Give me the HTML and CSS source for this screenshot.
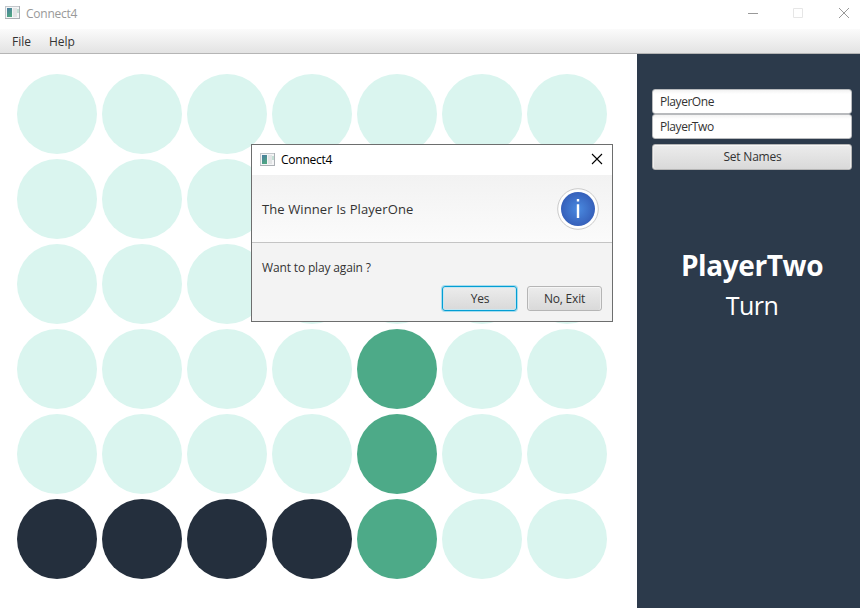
FILE: index.html
```html
<!DOCTYPE html>
<html lang="en">
<head>
<meta charset="utf-8">
<title>Connect4</title>
<link rel="stylesheet" href="styles.css">
</head>
<body>
<svg class="defs" width="0" height="0" aria-hidden="true">
  <defs>
    <linearGradient id="teal" x1="0" y1="0" x2="0.4" y2="1"><stop offset="0" stop-color="#4a7ba0"/><stop offset="1" stop-color="#4fa583"/></linearGradient>
    <radialGradient id="blue"><stop offset="0" stop-color="#4a8ae0"/><stop offset="1" stop-color="#3660ba"/></radialGradient>
    <symbol id="app" viewBox="0 0 16 14">
      <rect x=".5" y=".5" width="14" height="12" fill="#f4f5f6" stroke="#c3c7cb"/>
      <path d="M0 12.500h15M14.500 0v13" fill="none" stroke="#abafb4"/>
      <rect x="2" y="2" width="5" height="9" fill="url(#teal)"/>
      <rect x="8" y="2" width="4" height="9" fill="#e2e4e5"/>
      <rect x="12" y="3" width="2" height="4" fill="#c3dfd4"/>
    </symbol>
  </defs>
</svg>
<div class="window">
  <header class="titlebar">
    <svg class="app-icon" width="16" height="14"><use href="#app"/></svg>
    <span class="title">Connect4</span>
    <svg class="controls" width="102" height="12" fill="none" stroke="#999">
      <path d="M0 6.5h10"/><path d="M45.5 1.5h9v9h-9z" stroke="#e6e6e6"/><path d="M91 1l10 10M101 1l-10 10"/>
    </svg>
  </header>
  <nav class="menubar"><span class="file">File</span><span class="help">Help</span></nav>
  <main class="content">
    <section class="board">
      <i></i><i></i><i></i><i></i><i></i><i></i><i></i>
      <i></i><i></i><i></i><i></i><i></i><i></i><i></i>
      <i></i><i></i><i></i><i></i><i></i><i></i><i></i>
      <i></i><i></i><i></i><i></i><i class="green"></i><i></i><i></i>
      <i></i><i></i><i></i><i></i><i class="green"></i><i></i><i></i>
      <i class="dark"></i><i class="dark"></i><i class="dark"></i><i class="dark"></i><i class="green"></i><i></i><i></i>
    </section>
    <aside class="side">
      <div class="field"><span>PlayerOne</span></div>
      <div class="field"><span>PlayerTwo</span></div>
      <button class="btn set">Set Names</button>
      <div class="player"><span>PlayerTwo</span></div>
      <div class="turn"><span>Turn</span></div>
    </aside>
  </main>
  <div class="dialog">
    <div class="dialog-title">
      <svg class="app-icon" width="16" height="14"><use href="#app"/></svg>
      <span class="title">Connect4</span>
      <svg class="close" width="12" height="12" stroke="#000" stroke-width="1.1"><path d="M1 1l10 10M11 1L1 11"/></svg>
    </div>
    <div class="dialog-head">
      <span class="winner">The Winner Is PlayerOne</span>
      <svg width="42" height="42">
        <circle cx="21" cy="21" r="20.3" fill="#fff" stroke="#cacaca"/>
        <circle cx="21" cy="21" r="17" fill="url(#blue)"/>
        <path d="M19.800 11h2.400v2.600h-2.400zM19.800 16.200h2.400V30h-2.400z" fill="#fff"/>
      </svg>
    </div>
    <div class="dialog-body">
      <span class="again">Want to play again ?</span>
      <div class="actions"><button class="btn yes">Yes</button><button class="btn">No, Exit</button></div>
    </div>
  </div>
</div>
</body>
</html>
```
FILE: styles.css
```css
* { box-sizing: border-box; }
body { margin: 0; font: 12px/16px "Open Sans", "Noto Sans", sans-serif; color: #333; }
.defs { position: absolute; }
.window { position: relative; width: 860px; height: 608px; overflow: hidden; background: #fff; display: flex; flex-direction: column; }
.titlebar { height: 29px; flex: none; display: flex; align-items: center; padding: 0 10px 2px 5px; color: #999; }
.title { margin-left: 5px; letter-spacing: -.25px; }
.app-icon { margin-bottom: 1px; }
.controls { margin-left: auto; margin-bottom: 1px; }
.menubar { height: 25px; flex: none; display: flex; padding: 5px 12px 0; gap: 18px; background: linear-gradient(#fbfbfb, #e3e3e3); border-bottom: 1px solid #b5b5b5; }
.content { flex: 1; display: flex; }
.board { width: 637px; padding: 20px 0 0 17px; display: grid; grid-template-columns: repeat(7, 80px); grid-auto-rows: 80px; gap: 5px; align-content: start; }
.board i { border-radius: 50%; background: #daf5ef; }
.board .green { background: #4daa88; }
.board .dark { background: #242f3d; }
.side { flex: 1; background: #2c3a4b; padding: 35px 8px 0 15px; display: flex; flex-direction: column; }
.field { height: 25px; padding: 4px 7px; border: 1px solid #b8babd; border-radius: 3px; background: linear-gradient(#f2f2f2, #fff 4px); letter-spacing: -.45px; }
.btn { height: 25px; width: 75px; padding: 0; font: inherit; color: #333; letter-spacing: -.2px; border: 1px solid #b5b5b5; border-radius: 3px; background: linear-gradient(#ececec, #d9d9d9); box-shadow: inset 0 1px #f6f6f6, inset 1px 0 #eee, inset -1px 0 #eee; }
.set { width: 200px; height: 26px; margin-top: 5px; padding-left: 1px; }
.player { margin-top: 74px; height: 42px; font-size: 28px; font-weight: 700; line-height: 42px; text-align: center; color: #fff; letter-spacing: -.4px; }
.turn { height: 38px; font-size: 25px; line-height: 38px; text-align: center; color: #fff; letter-spacing: -.6px; }
.dialog { position: absolute; left: 251px; top: 144px; width: 362px; height: 178px; border: 1px solid #6d6e6e; background: #f3f3f3; display: flex; flex-direction: column; }
.dialog-title { height: 30px; display: flex; align-items: center; padding: 0 9px 0 8px; background: #fff; color: #000; }
.close { margin-left: auto; margin-bottom: 2px; }
.dialog-head { height: 68px; padding: 0 13px 0 10px; display: flex; align-items: center; justify-content: space-between; background: linear-gradient(#f2f2f2, #fbfbfb); border-bottom: 1px solid #c4c4c4; }
.winner { font-size: 13px; letter-spacing: .1px; }
.dialog-body { flex: 1; padding: 17px 10px 10px; display: flex; flex-direction: column; justify-content: space-between; }
.again { letter-spacing: -.15px; }
.actions { display: flex; justify-content: flex-end; gap: 10px; }
.yes { padding-left: 1px; border-color: #039ed3; box-shadow: 0 0 0 1px #a6dcee, inset 0 0 0 1px #c6e6f1; }
```
